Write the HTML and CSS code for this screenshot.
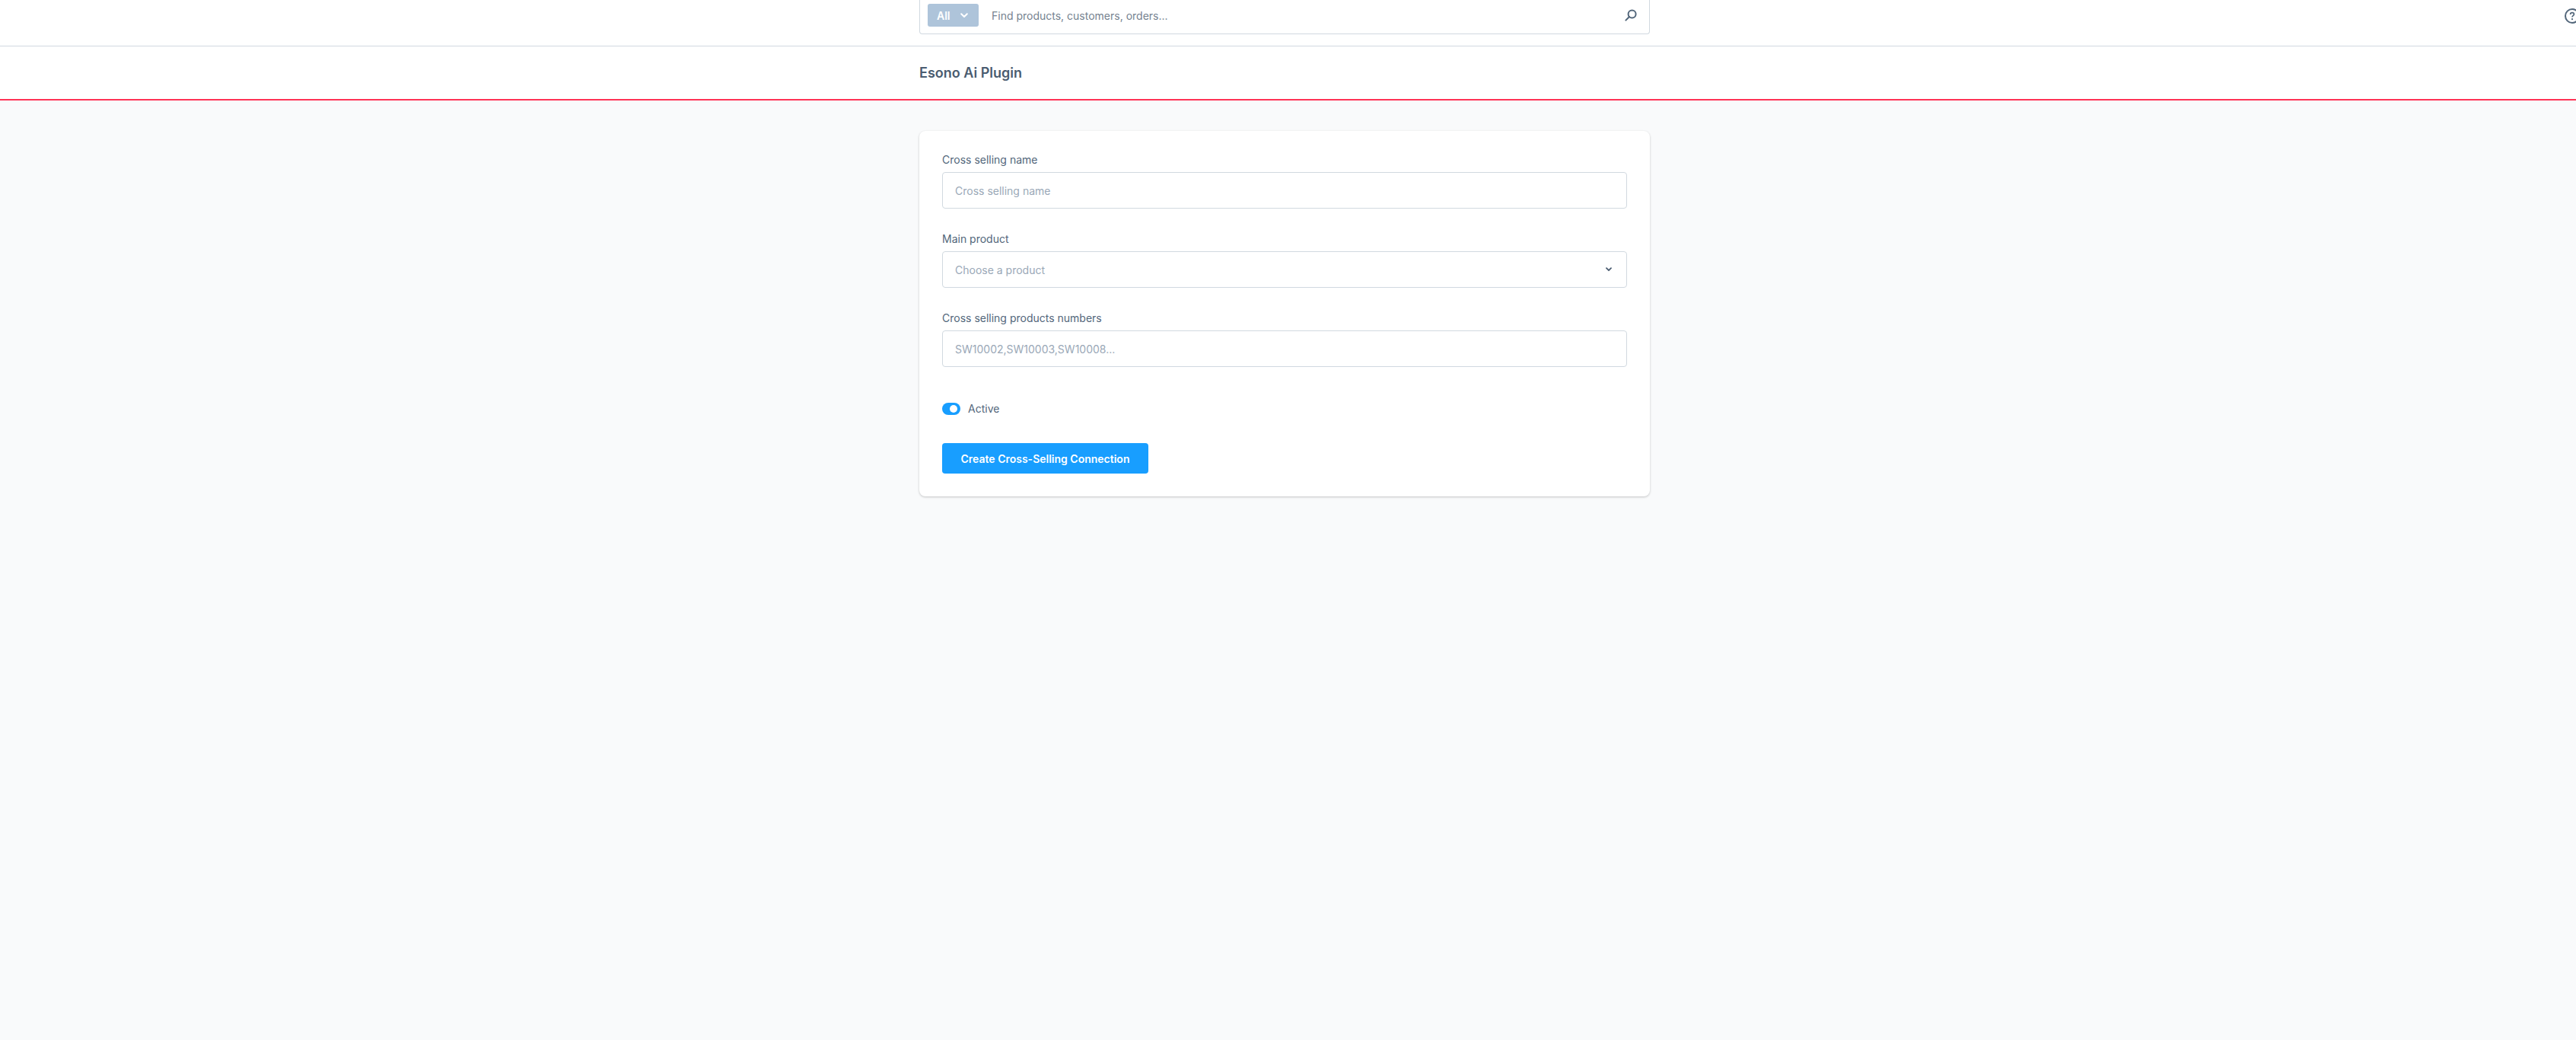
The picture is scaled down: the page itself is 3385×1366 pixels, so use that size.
FILE: index.html
```html
<!DOCTYPE html>
<html lang="en">
<head>
  <meta charset="UTF-8" />
  <title>Esono Ai Plugin</title>
  <link rel="stylesheet" href="styles.css">
</head>
<body>

<header class="topbar">
  <div class="search">
    <button class="search-type" type="button">
      <span>All</span>
      <svg class="search-type-icon" viewBox="0 0 10 7" width="10" height="7"><path d="M1.2 1.2 5 5l3.8-3.8" fill="none" stroke="currentColor" stroke-width="2" stroke-linecap="round" stroke-linejoin="round"/></svg>
    </button>
    <input class="search-input" type="text" placeholder="Find products, customers, orders...">
    <svg class="search-icon" viewBox="0 0 16 16" width="16" height="16"><circle cx="9.6" cy="6.4" r="5" fill="none" stroke="currentColor" stroke-width="2"/><path d="M6 10 1.4 14.6" fill="none" stroke="currentColor" stroke-width="2" stroke-linecap="round"/></svg>
  </div>
  <svg class="help-icon" viewBox="0 0 20 20" width="20" height="20"><circle cx="10" cy="10" r="9" fill="none" stroke="currentColor" stroke-width="2"/><path d="M7.6 8c0-1.4 1.1-2.3 2.4-2.3s2.4.8 2.4 2.1c0 1.8-2.4 1.9-2.4 3.6" fill="none" stroke="currentColor" stroke-width="1.7"/><circle cx="10" cy="14.2" r="1.1" fill="currentColor"/></svg>
</header>

<div class="page-head">
  <h1>Esono Ai Plugin</h1>
</div>

<main class="content">
  <form class="card">
    <div class="field">
      <label for="name">Cross selling name</label>
      <input id="name" type="text" placeholder="Cross selling name">
    </div>

    <div class="field">
      <label for="product">Main product</label>
      <div class="select-wrap">
        <select id="product">
          <option>Choose a product</option>
        </select>
        <svg class="select-icon" viewBox="0 0 8 6" width="8" height="6"><path d="M1 1.2 4 4.2l3-3" fill="none" stroke="currentColor" stroke-width="1.8" stroke-linecap="round" stroke-linejoin="round"/></svg>
      </div>
    </div>

    <div class="field">
      <label for="numbers">Cross selling products numbers</label>
      <input id="numbers" type="text" placeholder="SW10002,SW10003,SW10008...">
    </div>

    <div class="switch">
      <span class="switch-track"><span class="switch-dot"></span></span>
      <span class="switch-label">Active</span>
    </div>

    <button class="btn-primary" type="button">Create Cross-Selling Connection</button>
  </form>
</main>

</body>
</html>
```

FILE: styles.css
```css
:root {
  --primary: #189eff;
  --text: #52667a;
  --heading: #4a5c70;
  --placeholder: #9aa8b7;
  --border: #d1d9e0;
  --bg: #f9fafb;
}

* {
  box-sizing: border-box;
}

html, body {
  height: 100%;
}

body {
  margin: 0;
  background: var(--bg);
  color: var(--text);
  font-family: "Inter", sans-serif;
  font-size: 14px;
  overflow: hidden;
}

.topbar {
  display: flex;
  height: 61px;
  padding-left: 1208px;
  background: white;
  border-bottom: 1px solid var(--border);
  overflow: hidden;
}

.search {
  display: flex;
  flex: none;
  align-items: center;
  width: 960px;
  height: 45px;
  padding: 0 16px 4px 10px;
  background: white;
  border: 1px solid var(--border);
  border-top: none;
  border-radius: 0 0 4px 4px;
}

.search-type {
  display: flex;
  align-items: center;
  gap: 13px;
  width: 67px;
  height: 30px;
  padding: 0 0 0 12px;
  border: none;
  border-radius: 3px;
  background: #aec4da;
  color: white;
  font-family: "Inter", sans-serif;
  font-size: 14px;
  font-weight: 600;
}

.search-input {
  flex: 1;
  margin-left: 17px;
  border: none;
  outline: none;
  padding: 0;
  font-family: "Inter", sans-serif;
  font-size: 14px;
  color: var(--text);
}

.search-input::placeholder {
  color: #75828f;
  opacity: 1;
}

.search-icon {
  color: var(--text);
}

.help-icon {
  flex: none;
  margin: 11px 0 0 1202px;
  color: var(--text);
}

.page-head {
  height: 71px;
  padding: 23px 0 0 1208px;
  background: white;
  border-bottom: 2px solid #ff3355;
}

.page-head h1 {
  margin: 0;
  font-size: 18px;
  font-weight: 600;
  line-height: 24px;
  color: var(--heading);
}

.content {
  padding: 40px 0 0 1208px;
}

.card {
  width: 960px;
  height: 480px;
  padding: 26px 30px 0;
  background: white;
  border-radius: 8px;
  box-shadow: 0 1px 3px rgba(0, 0, 0, 0.22);
}

.field {
  margin-bottom: 28px;
}

.field label {
  display: block;
  height: 28px;
  line-height: 24px;
  font-size: 14px;
}

.field input, .field select {
  display: block;
  width: 100%;
  height: 48px;
  padding: 0 16px;
  background: white;
  border: 1px solid var(--border);
  border-radius: 4px;
  outline: none;
  font-family: "Inter", sans-serif;
  font-size: 14px;
  color: var(--placeholder);
}

.field input::placeholder {
  color: var(--placeholder);
  opacity: 1;
}

.field select {
  appearance: none;
}

.select-wrap {
  position: relative;
}

.select-icon {
  position: absolute;
  top: 21px;
  right: 20px;
  color: var(--heading);
}

.switch {
  display: flex;
  align-items: center;
  gap: 10px;
  margin-top: 47px;
}

.switch-track {
  display: flex;
  align-items: center;
  justify-content: flex-end;
  width: 24px;
  height: 16px;
  padding-right: 4px;
  border-radius: 8px;
  background: var(--primary);
}

.switch-dot {
  width: 10px;
  height: 10px;
  border-radius: 50%;
  background: white;
}

.switch-label {
  line-height: 16px;
}

.btn-primary {
  display: block;
  height: 40px;
  width: 271px;
  margin-top: 37px;
  padding: 0;
  border: none;
  border-radius: 4px;
  background: var(--primary);
  color: white;
  font-family: "Inter", sans-serif;
  font-size: 14px;
  font-weight: 600;
}
```
